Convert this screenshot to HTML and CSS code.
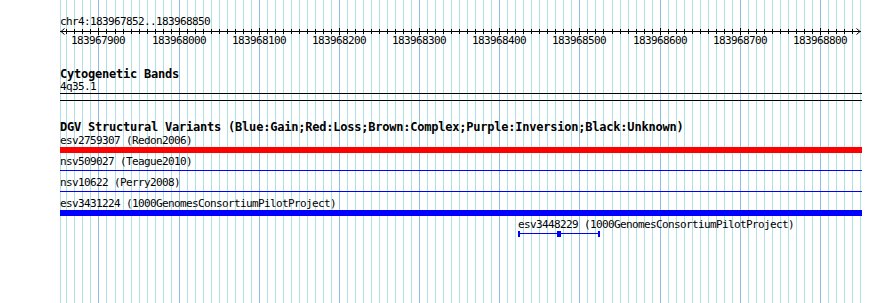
FILE: index.html
```html
<!DOCTYPE html>
<html lang="en">
<head>
    <meta charset="UTF-8">
    <title>chr4:183967852..183968850</title>
    <link rel="stylesheet" href="styles.css">
</head>
<body>
<div class="browser">
    <svg class="grid" id="grid" width="890" height="303"></svg>
    <div class="tracks">
        <div class="segment">chr4:183967852..183968850</div>
        <svg class="ruler" id="ruler" width="890" height="18"></svg>

        <div class="track bands">
            <div class="track-title">Cytogenetic Bands</div>
            <div class="feature">
                <div class="feat-label">4q35.1</div>
                <div class="band gneg"></div>
            </div>
        </div>

        <div class="track dgv">
            <div class="track-title">DGV Structural Variants (Blue:Gain;Red:Loss;Brown:Complex;Purple:Inversion;Black:Unknown)</div>
            <div class="feature">
                <div class="feat-label">esv2759307 (Redon2006)</div>
                <div class="glyph bar loss"></div>
            </div>
            <div class="feature">
                <div class="feat-label">nsv509027 (Teague2010)</div>
                <div class="glyph thin gain"></div>
            </div>
            <div class="feature">
                <div class="feat-label">nsv10622 (Perry2008)</div>
                <div class="glyph thin gain"></div>
            </div>
            <div class="feature">
                <div class="feat-label">esv3431224 (1000GenomesConsortiumPilotProject)</div>
                <div class="glyph bar gain"></div>
            </div>
            <div class="feature" style="margin-left: 458px">
                <div class="feat-label">esv3448229 (1000GenomesConsortiumPilotProject)</div>
                <svg class="segments" width="82" height="6">
                    <rect x="0" y="0" width="2" height="6"></rect>
                    <rect x="0" y="2" width="82" height="1"></rect>
                    <rect x="39" y="0" width="4" height="6"></rect>
                    <rect x="80" y="0" width="2" height="6"></rect>
                </svg>
            </div>
        </div>
    </div>
</div>
<script src="grid.js"></script>
</body>
</html>
```

FILE: styles.css
```css
body {
    margin: 0;
    background: #fff;
}
.browser {
    position: relative;
    width: 890px;
    height: 303px;
    overflow: hidden;
    font-family: "DejaVu Sans Mono", monospace;
    font-size: 11px;
    letter-spacing: -0.62px;
    color: #000;
}
.grid {
    position: absolute;
    left: 0;
    top: 0;
}
.grid .minor {
    stroke: #b0e0e6;
}
.grid .major {
    stroke: #8fbfe0;
}
.tracks {
    position: relative;
    padding-top: 15px;
}
.segment {
    margin-left: 60px;
    line-height: 13px;
    height: 13px;
}
.ruler {
    display: block;
}
.ruler line {
    stroke: #000;
}
.ruler polyline {
    stroke: #000;
    fill: none;
}
.ruler text {
    font-family: "DejaVu Sans Mono", monospace;
    font-size: 11px;
    letter-spacing: -0.62px;
    fill: #000;
}
.track {
    margin-left: 60px;
    width: 802px;
}
.bands {
    margin-top: 22px;
}
.dgv {
    margin-top: 20px;
}
.track-title {
    font-weight: bold;
    font-size: 12px;
    letter-spacing: -0.22px;
    line-height: 13px;
    white-space: nowrap;
}
.bands .track-title {
    line-height: 12px;
}
.feature {
    margin-bottom: 2px;
}
.feat-label {
    line-height: 13px;
    height: 13px;
    white-space: nowrap;
}
.band {
    box-sizing: border-box;
    height: 8px;
    border-top: 1px solid #000;
    border-bottom: 1px solid #000;
}
.glyph {
    height: 6px;
}
.bar.loss {
    background: #ff0000;
}
.bar.gain {
    background: #0000ff;
}
.thin {
    box-sizing: border-box;
    border-top: 1px solid transparent;
}
.thin.gain {
    background: linear-gradient(#0000ff, #0000ff) 0 2px / 100% 1px no-repeat;
    border: none;
}
.segments {
    display: block;
    fill: #0000ff;
}
```

FILE: grid.js
```js
var START = 183967852;
var END = 183968850;
var LEFT = 60;
var WIDTH = 800;
var NS = 'http://www.w3.org/2000/svg';

function xOf(bp) {
    return LEFT + Math.round((bp - START) * WIDTH / (END - START));
}

function add(parent, tag, attrs) {
    var el = document.createElementNS(NS, tag);
    for (var k in attrs) el.setAttribute(k, attrs[k]);
    parent.appendChild(el);
    return el;
}

// background grid, one line every 10 bp, darker every 100 bp
var grid = document.getElementById('grid');
add(grid, 'line', { x1: LEFT + 0.5, y1: 0, x2: LEFT + 0.5, y2: 303, 'class': 'minor' });
for (var bp = Math.ceil(START / 10) * 10; bp <= END; bp += 10) {
    var x = xOf(bp) + 0.5;
    add(grid, 'line', { x1: x, y1: 0, x2: x, y2: 303, 'class': bp % 100 === 0 ? 'major' : 'minor' });
}

// ruler with arrows, ticks and labels
var ruler = document.getElementById('ruler');
add(ruler, 'line', { x1: LEFT, y1: 3.5, x2: LEFT + WIDTH + 1, y2: 3.5 });
add(ruler, 'polyline', { points: (LEFT + 4.5) + ',0.5 ' + (LEFT + 1) + ',3.5 ' + (LEFT + 4.5) + ',6.5' });
add(ruler, 'polyline', { points: (LEFT + WIDTH - 3.5) + ',0.5 ' + (LEFT + WIDTH) + ',3.5 ' + (LEFT + WIDTH - 3.5) + ',6.5' });
for (var t = Math.ceil(START / 10) * 10; t < END; t += 10) {
    var tx = xOf(t) + 0.5;
    var major = t % 100 === 0;
    add(ruler, 'line', { x1: tx, y1: major ? 0 : 1, x2: tx, y2: major ? 7 : 6 });
    if (major) {
        var label = add(ruler, 'text', { x: xOf(t), y: 16, 'text-anchor': 'middle' });
        label.textContent = t;
    }
}
```
